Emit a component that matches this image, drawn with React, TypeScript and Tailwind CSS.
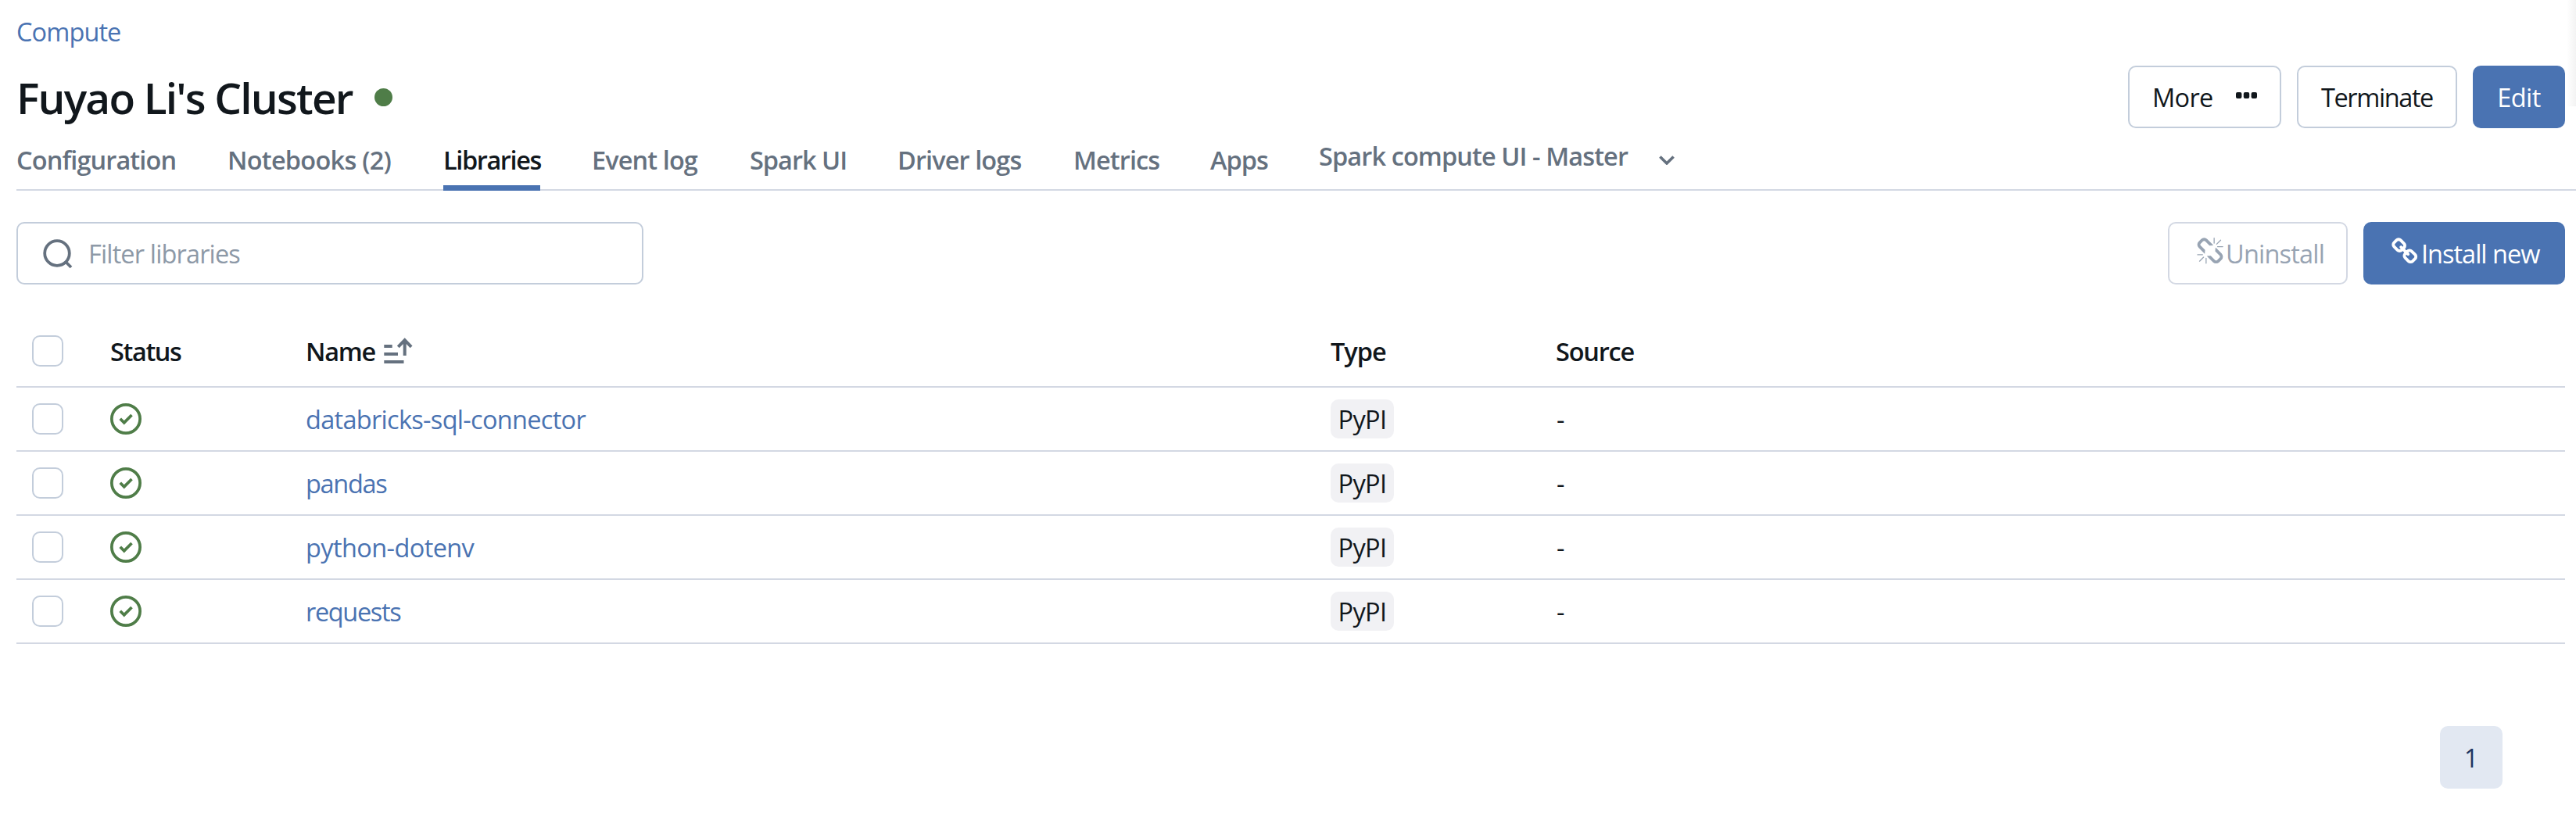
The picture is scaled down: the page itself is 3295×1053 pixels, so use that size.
import React from "react";

const LINK_PATH =
  "M1456 1216q0-40-28-68l-208-208q-28-28-68-28-42 0-72 32 3 3 19 18.5t21.5 21.5 15 19 13 25.5 3.5 27.5q0 40-28 68t-68 28q-15 0-27.5-3.5t-25.5-13-19-15-21.5-21.5-18.5-19q-33 31-33 73 0 40 28 68l206 207q27 27 68 27 40 0 68-26l147-146q28-28 28-67zm-703-705q0-40-28-68l-206-207q-28-28-68-28-39 0-68 27l-147 146q-28 28-28 67 0 40 28 68l208 208q27 27 68 27 42 0 72-31-3-3-19-18.5t-21.5-21.5-15-19-13-25.5-3.5-27.5q0-40 28-68t68-28q15 0 27.5 3.5t25.5 13 19 15 21.5 21.5 18.5 19q33-31 33-73zm895 705q0 120-85 203l-147 146q-83 83-203 83-121 0-204-85l-206-207q-83-83-83-203 0-123 88-209l-88-88q-86 88-208 88-120 0-204-84l-208-208q-84-84-84-204t85-203l147-146q83-83 203-83 121 0 204 85l206 207q83 83 83 203 0 123-88 209l88 88q86-88 208-88 120 0 204 84l208 208q84 84 84 204z";
const UNLINK_PATH =
  "M503 1271l-256 256q-10 9-23 9-12 0-23-9-9-10-9-23t9-23l256-256q10-9 23-9t23 9q9 10 9 23t-9 23zm169 41v320q0 14-9 23t-23 9-23-9-9-23v-320q0-14 9-23t23-9 23 9 9 23zm-224-224q0 14-9 23t-23 9h-320q-14 0-23-9t-9-23 9-23 23-9h320q14 0 23 9t9 23zm1264 128q0 120-85 203l-147 146q-83 83-203 83-121 0-204-85l-334-335q-21-21-42-56l239-18 273 274q28 28 68 27.5t68-27.5l147-146q28-28 28-67 0-40-28-68l-274-275 18-239q35 21 56 42l336 336q84 86 84 204zm-617-724l-239 18-273-274q-28-28-68-28-39 0-68 27l-147 146q-28 28-28 67 0 40 28 68l274 274-18 240q-35-21-56-42l-336-336q-84-86-84-204 0-120 85-203l147-146q83-83 203-83 121 0 204 85l334 335q21 21 42 56zm633 84q0 14-9 23t-23 9h-320q-14 0-23-9t-9-23 9-23 23-9h320q14 0 23 9t9 23zm-544-544v320q0 14-9 23t-23 9-23-9-9-23v-320q0-14 9-23t23-9 23 9 9 23zm407 151l-256 256q-11 9-23 9t-23-9q-9-10-9-23t9-23l256-256q10-9 23-9t23 9q9 10 9 23t-9 23z";

const TABS = [
  { label: "Configuration", box: "w-[204px] mr-[66px] tracking-[-0.9px]" },
  { label: "Notebooks (2)", box: "w-[210px] mr-[66px] tracking-[-0.75px]" },
  { label: "Libraries", box: "w-[124px] mr-[66px] tracking-[-1.4px]", active: true },
  { label: "Event log", box: "w-[136px] mr-[66px] tracking-[-0.9px]" },
  { label: "Spark UI", box: "w-[123px] mr-[66px] tracking-[-1px]" },
  { label: "Driver logs", box: "w-[159px] mr-[66px] tracking-[-0.9px]" },
  { label: "Metrics", box: "w-[109px] mr-[66px] tracking-[-0.9px]" },
  { label: "Apps", box: "w-[74px] mr-[65px] tracking-[-1px]" },
];

const ROWS = [
  { name: "databricks-sql-connector", tracking: "tracking-[-0.7px]" },
  { name: "pandas", tracking: "tracking-[-1.3px]" },
  { name: "python-dotenv", tracking: "tracking-[-0.6px]" },
  { name: "requests", tracking: "tracking-[-1.35px]" },
];

function Checkbox() {
  return <span className="block size-10 rounded-[10px] border-2 border-[#c3cddb] bg-white" />;
}

function CheckCircle() {
  return (
    <svg className="block size-10" viewBox="0 0 16 16" fill="none" stroke="#4f7d48" strokeWidth="1.5">
      <circle cx="8" cy="8" r="7.25" />
      <path d="M5.1 7.9 7.1 9.9 11 6" />
    </svg>
  );
}

const COLS = "grid grid-cols-[100px_250px_1311px_288px_1fr] items-center border-b-2 border-[#d3d8e3] pl-5";

export default function App() {
  return (
    <div className="relative flex h-[1053px] w-[3295px] flex-col overflow-hidden bg-white pl-[21px] font-['Open_Sans','Noto_Sans',sans-serif] text-[32.5px] leading-10 text-[#11171c]">
      <div className="absolute top-0 right-0 h-[136px] w-3 bg-linear-to-r from-white to-[#f3f3f3]" />
      <a className="mt-[21px] block h-10 tracking-[-0.9px] text-[#4a73b2]">Compute</a>
      <header className="mt-[23px] flex h-20 items-center pr-[14px]">
        <h1 className="pt-0.5 text-[55px] leading-20 font-semibold tracking-[-1.8px] whitespace-nowrap">Fuyao Li's Cluster</h1>
        <span className="ml-7 size-[23px] rounded-full bg-[#4f7d48]" />
        <div className="ml-auto flex gap-5">
          <button className="flex h-20 w-[196px] items-center rounded-[10px] border-2 border-[#c3cddb] pl-[29px] tracking-[-0.7px]">
            <span className="w-[107px] pt-0.5 text-left">More</span>
            <svg className="-mt-1 h-2 w-[27px]" viewBox="0 0 27 8" fill="currentColor">
              <rect width="7.4" height="8" rx="2" />
              <rect x="9.8" width="7.4" height="8" rx="2" />
              <rect x="19.6" width="7.4" height="8" rx="2" />
            </svg>
          </button>
          <button className="h-20 w-[205px] rounded-[10px] border-2 border-[#c3cddb] pt-0.5 tracking-[-1.4px]">Terminate</button>
          <button className="h-20 w-[118px] rounded-[10px] bg-[#4a73b2] pt-0.5 tracking-[-0.6px] text-white">Edit</button>
        </div>
      </header>
      <nav className="flex h-20 border-b-2 border-[#d3d8e3] font-semibold tracking-[-0.9px] whitespace-nowrap text-[#65717f]">
        {TABS.map((t) => (
          <a
            key={t.label}
            className={`block h-20 shrink-0 pt-[21px] ${t.box} ${t.active ? "border-b-[7px] border-[#4a73b2] text-[#11171c]" : ""}`}
          >
            {t.label}
          </a>
        ))}
        <a className="flex h-20 items-start pt-4">
          <span className="w-[435px]">Spark compute UI - Master</span>
          <svg className="mt-[19px] h-3 w-5" viewBox="0 0 20 12" fill="none" stroke="currentColor" strokeWidth="3.6">
            <path d="M1.4 1.4 10 10 18.6 1.4" />
          </svg>
        </a>
      </nav>
      <div className="mt-10 flex h-20 items-center justify-between pr-[14px]">
        <div className="flex h-20 w-[802px] items-center rounded-[10px] border-2 border-[#c3cddb] pl-8 text-[#8d99a7]">
          <svg className="size-10" viewBox="0 0 40 40" fill="none" stroke="#65717f" strokeWidth="3.8">
            <circle cx="18" cy="20" r="15.8" />
            <path d="m28.5 30.5 7.5 7.5" />
          </svg>
          <span className="ml-[18px] pt-0.5 tracking-[-0.85px]">Filter libraries</span>
        </div>
        <div className="flex gap-5">
          <button className="flex h-20 w-[230px] items-center rounded-[10px] border-2 border-[#d3d8e3] pl-[34px] tracking-[-0.8px] text-[#98a4b3]">
            <svg className="-mt-1 size-9 shrink-0" viewBox="0 0 1792 1792" fill="currentColor">
              <path d={UNLINK_PATH} />
            </svg>
            <span className="ml-0.5 pt-0.5">Uninstall</span>
          </button>
          <button className="flex h-20 w-[258px] items-center rounded-[10px] bg-[#4a73b2] pl-[36px] tracking-[-1px] whitespace-nowrap text-white">
            <svg className="-mt-1 size-9 shrink-0" viewBox="0 0 1792 1792" fill="currentColor">
              <path d={LINK_PATH} />
            </svg>
            <span className="ml-0.5 pt-0.5">Install new</span>
          </button>
        </div>
      </div>
      <main className="mt-10 mr-[14px]">
        <div className={`${COLS} h-[92px] font-semibold`}>
          <Checkbox />
          <span className="pt-0.5 tracking-[-1.4px]">Status</span>
          <span className="flex items-center">
            <span className="w-[97px] pt-0.5 tracking-[-1.3px]">Name</span>
            <svg className="size-10" viewBox="0 0 40 40" fill="none" stroke="#65717f" strokeWidth="4">
              <path d="M3.3 14h10.4M3.3 24H21M3.3 34h25.2M29.7 26V6M21.3 14.8 29.7 6.2l8.4 8.6" />
            </svg>
          </span>
          <span className="pt-0.5 tracking-[-1px]">Type</span>
          <span className="pt-0.5 tracking-[-1.2px]">Source</span>
        </div>
        {ROWS.map((row) => (
          <div key={row.name} className={`${COLS} h-[82px]`}>
            <Checkbox />
            <CheckCircle />
            <a className={`pt-0.5 text-[#4a73b2] ${row.tracking}`}>{row.name}</a>
            <span className="flex h-[50px] w-[81px] items-center justify-center rounded-[10px] bg-[#f1f1f4] pt-0.5 tracking-[-0.6px]">PyPI</span>
            <span className="pt-0.5 pl-px">-</span>
          </div>
        ))}
      </main>
      <div className="mt-[105px] mr-[94px] flex size-20 items-center justify-center self-end rounded-[10px] bg-[#e2e8f2] pt-0.5 text-[#1f3560]">1</div>
    </div>
  );
}
